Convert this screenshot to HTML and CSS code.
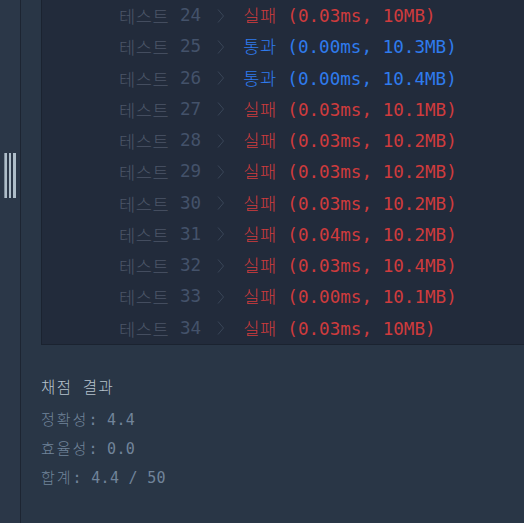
FILE: index.html
```html
<!DOCTYPE html>
<html lang="ko">
<head>
<meta charset="utf-8">
<link rel="stylesheet" href="styles.css">
</head>
<body>
<div class="layout">
  <aside class="sidebar">
    <div class="grip"><span></span><span></span><span></span></div>
  </aside>
  <main class="main">
    <div class="console">
      <div class="row"><span class="label ko">테스트</span><span class="num"> 24</span><span class="chev"><svg width="8" height="14" viewBox="0 0 8 14"><path d="M1 0.5 L6.5 7 L1 13.5" fill="none" stroke="#3a4658" stroke-width="1"/></svg></span><span class="fail"><span class="ko">실패</span> (0.03ms, 10MB)</span></div>
      <div class="row"><span class="label ko">테스트</span><span class="num"> 25</span><span class="chev"><svg width="8" height="14" viewBox="0 0 8 14"><path d="M1 0.5 L6.5 7 L1 13.5" fill="none" stroke="#3a4658" stroke-width="1"/></svg></span><span class="pass"><span class="ko">통과</span> (0.00ms, 10.3MB)</span></div>
      <div class="row"><span class="label ko">테스트</span><span class="num"> 26</span><span class="chev"><svg width="8" height="14" viewBox="0 0 8 14"><path d="M1 0.5 L6.5 7 L1 13.5" fill="none" stroke="#3a4658" stroke-width="1"/></svg></span><span class="pass"><span class="ko">통과</span> (0.00ms, 10.4MB)</span></div>
      <div class="row"><span class="label ko">테스트</span><span class="num"> 27</span><span class="chev"><svg width="8" height="14" viewBox="0 0 8 14"><path d="M1 0.5 L6.5 7 L1 13.5" fill="none" stroke="#3a4658" stroke-width="1"/></svg></span><span class="fail"><span class="ko">실패</span> (0.03ms, 10.1MB)</span></div>
      <div class="row"><span class="label ko">테스트</span><span class="num"> 28</span><span class="chev"><svg width="8" height="14" viewBox="0 0 8 14"><path d="M1 0.5 L6.5 7 L1 13.5" fill="none" stroke="#3a4658" stroke-width="1"/></svg></span><span class="fail"><span class="ko">실패</span> (0.03ms, 10.2MB)</span></div>
      <div class="row"><span class="label ko">테스트</span><span class="num"> 29</span><span class="chev"><svg width="8" height="14" viewBox="0 0 8 14"><path d="M1 0.5 L6.5 7 L1 13.5" fill="none" stroke="#3a4658" stroke-width="1"/></svg></span><span class="fail"><span class="ko">실패</span> (0.03ms, 10.2MB)</span></div>
      <div class="row"><span class="label ko">테스트</span><span class="num"> 30</span><span class="chev"><svg width="8" height="14" viewBox="0 0 8 14"><path d="M1 0.5 L6.5 7 L1 13.5" fill="none" stroke="#3a4658" stroke-width="1"/></svg></span><span class="fail"><span class="ko">실패</span> (0.03ms, 10.2MB)</span></div>
      <div class="row"><span class="label ko">테스트</span><span class="num"> 31</span><span class="chev"><svg width="8" height="14" viewBox="0 0 8 14"><path d="M1 0.5 L6.5 7 L1 13.5" fill="none" stroke="#3a4658" stroke-width="1"/></svg></span><span class="fail"><span class="ko">실패</span> (0.04ms, 10.2MB)</span></div>
      <div class="row"><span class="label ko">테스트</span><span class="num"> 32</span><span class="chev"><svg width="8" height="14" viewBox="0 0 8 14"><path d="M1 0.5 L6.5 7 L1 13.5" fill="none" stroke="#3a4658" stroke-width="1"/></svg></span><span class="fail"><span class="ko">실패</span> (0.03ms, 10.4MB)</span></div>
      <div class="row"><span class="label ko">테스트</span><span class="num"> 33</span><span class="chev"><svg width="8" height="14" viewBox="0 0 8 14"><path d="M1 0.5 L6.5 7 L1 13.5" fill="none" stroke="#3a4658" stroke-width="1"/></svg></span><span class="fail"><span class="ko">실패</span> (0.00ms, 10.1MB)</span></div>
      <div class="row"><span class="label ko">테스트</span><span class="num"> 34</span><span class="chev"><svg width="8" height="14" viewBox="0 0 8 14"><path d="M1 0.5 L6.5 7 L1 13.5" fill="none" stroke="#3a4658" stroke-width="1"/></svg></span><span class="fail"><span class="ko">실패</span> (0.03ms, 10MB)</span></div>
    </div>
    <section class="result">
      <h3 class="result-title">채점 결과</h3>
      <p class="result-line"><span class="ko">정확성</span>: 4.4</p>
      <p class="result-line"><span class="ko">효율성</span>: 0.0</p>
      <p class="result-line"><span class="ko">합계</span>: 4.4 / 50</p>
    </section>
  </main>
</div>
</body>
</html>
```
FILE: styles.css
```css
html, body {
  margin: 0;
  padding: 0;
  height: 100%;
  overflow: hidden;
  background: #293646;
}
.layout {
  display: flex;
  height: 523px;
}
.sidebar {
  width: 20px;
  flex: 0 0 20px;
  background: #2b3748;
  border-right: 1px solid #1d2532;
  display: flex;
  align-items: flex-start;
  justify-content: center;
}
.grip {
  margin-top: 153px;
  display: flex;
  gap: 2px;
  height: 45px;
}
.grip span {
  width: 3px;
  background: #aebdc9;
  border-left: 1px solid #7f8d9b;
  box-sizing: border-box;
}
.grip span:nth-child(2),
.grip span:nth-child(3) {
  border-left: none;
  width: 2px;
}
.grip span:nth-child(3) { width: 3px; }
.main {
  flex: 1;
  padding-left: 20px;
  background: #293646;
  min-width: 0;
}
.console {
  background: #222b3b;
  border-left: 1px solid #1b2330;
  border-bottom: 1px solid #1b2330;
  padding-left: 77px;
  font-family: "DejaVu Sans Mono", "Noto Sans CJK KR", monospace;
  font-size: 17.6px;
}
.row {
  height: 31.27px;
  line-height: 31.27px;
  display: flex;
  align-items: center;
  white-space: pre;
}
.ko {
  font-family: "Noto Sans CJK KR", sans-serif;
  font-weight: 300;
}
.row .ko { letter-spacing: 0.6px; }
.label { color: #4c5668; }
.num { color: #44526a; }
.chev {
  display: inline-flex;
  width: 42px;
  justify-content: center;
  padding-right: 2px;
  box-sizing: border-box;
}
.fail { color: #cf3b3d; }
.pass { color: #2f7bed; }
.result {
  padding-top: 27px;
}
.result-title {
  margin: 0 0 5px;
  font-family: "Noto Sans CJK KR", "DejaVu Sans", sans-serif;
  font-weight: 300;
  font-size: 15.5px;
  line-height: 28px;
  color: #b6c2cd;
  letter-spacing: 1.6px;
  word-spacing: 4px;
}
.result-line {
  margin: 0;
  font-family: "DejaVu Sans Mono", "Noto Sans CJK KR", monospace;
  font-size: 15px;
  line-height: 28px;
  color: #71849a;
  letter-spacing: 0.3px;
}
.result-line .ko { letter-spacing: 2px; }
```
